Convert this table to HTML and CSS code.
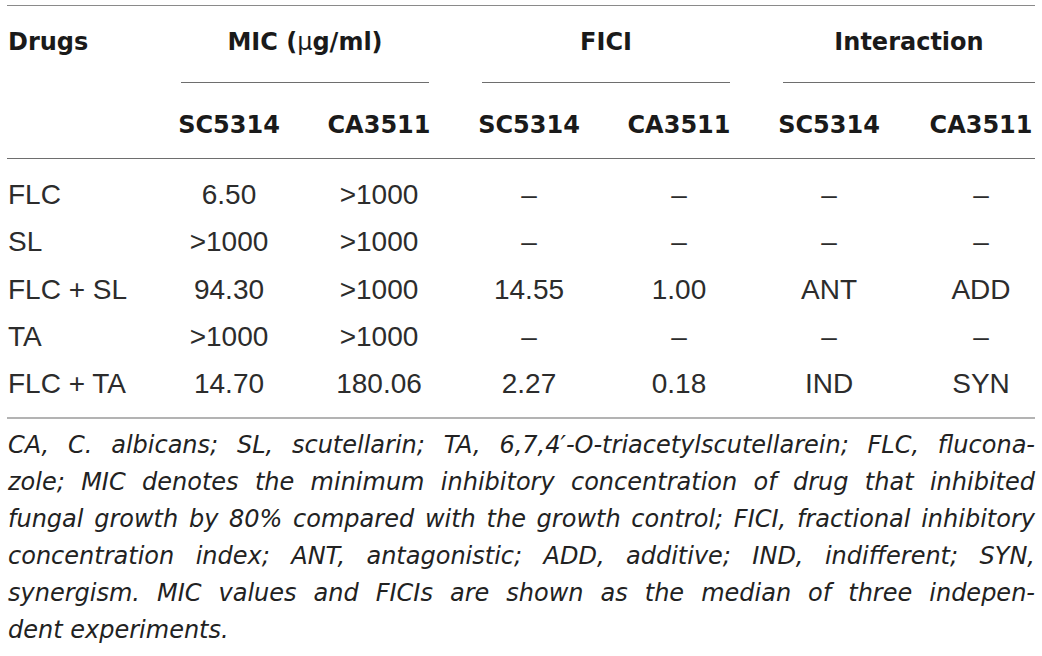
FILE: index.html
```html
<!DOCTYPE html>
<html lang="en">
<head>
<meta charset="utf-8">
<title>Table</title>
<link rel="stylesheet" href="styles.css">
</head>
<body>
<div class="page">
  <table class="tbl">
    <colgroup>
      <col class="c0"><col class="cn"><col class="cn"><col class="cn"><col class="cn"><col class="cn"><col class="clast">
    </colgroup>
    <thead>
      <tr class="h1">
        <th class="drugs">Drugs</th>
        <th colspan="2"><div class="grp g-mic">MIC (<span class="mu">µ</span>g/ml)</div></th>
        <th colspan="2"><div class="grp g-fici">FICI</div></th>
        <th colspan="2"><div class="grp g-int">Interaction</div></th>
      </tr>
      <tr class="h2">
        <th></th>
        <th>SC5314</th>
        <th>CA3511</th>
        <th>SC5314</th>
        <th>CA3511</th>
        <th>SC5314</th>
        <th class="last">CA3511</th>
      </tr>
    </thead>
    <tbody>
      <tr class="first">
        <td class="name">FLC</td><td>6.50</td><td>&gt;1000</td><td>–</td><td>–</td><td>–</td><td class="last">–</td>
      </tr>
      <tr>
        <td class="name">SL</td><td>&gt;1000</td><td>&gt;1000</td><td>–</td><td>–</td><td>–</td><td class="last">–</td>
      </tr>
      <tr>
        <td class="name">FLC + SL</td><td>94.30</td><td>&gt;1000</td><td>14.55</td><td>1.00</td><td>ANT</td><td class="last">ADD</td>
      </tr>
      <tr>
        <td class="name">TA</td><td>&gt;1000</td><td>&gt;1000</td><td>–</td><td>–</td><td>–</td><td class="last">–</td>
      </tr>
      <tr class="end">
        <td class="name">FLC + TA</td><td>14.70</td><td>180.06</td><td>2.27</td><td>0.18</td><td>IND</td><td class="last">SYN</td>
      </tr>
    </tbody>
  </table>
  <p class="note">
    <span class="ln">CA, C. albicans; SL, scutellarin; TA, 6,7,4′-O-triacetylscutellarein; FLC, flucona-</span>
    <span class="ln">zole; MIC denotes the minimum inhibitory concentration of drug that inhibited</span>
    <span class="ln">fungal growth by 80% compared with the growth control; FICI, fractional inhibitory</span>
    <span class="ln">concentration index; ANT, antagonistic; ADD, additive; IND, indifferent; SYN,</span>
    <span class="ln">synergism. MIC values and FICIs are shown as the median of three indepen-</span>
    <span class="ln lastln">dent experiments.</span>
  </p>
</div>
</body>
</html>
```

FILE: styles.css
```css
html, body {
  margin: 0;
  padding: 0;
  background: #ffffff;
}

body {
  font-family: "DejaVu Sans", "Liberation Sans", sans-serif;
  color: #1f1f1f;
}

.page {
  padding-top: 5px;
}

.tbl {
  margin-left: 7px;
  width: 1028px;
  table-layout: fixed;
  border-collapse: separate;
  border-spacing: 0;
  border-top: 1px solid #8a8a8a;
}

.c0 { width: 147px; }
.cn { width: 150px; }
.clast { width: 131px; }

.tbl th,
.tbl td {
  padding: 0;
  text-align: center;
  vertical-align: top;
  white-space: nowrap;
}

.tbl th {
  font-size: 24px;
  font-weight: bold;
  line-height: 28px;
  color: #1a1a1a;
}

.h1 th {
  padding-top: 22px;
}

.h1 .drugs {
  text-align: left;
  padding-left: 1px;
}

.grp {
  padding-bottom: 26px;
  border-bottom: 1px solid #6e6e6e;
}

.g-mic { margin: 0 25px 0 27px; }
.g-fici { margin: 0 24px 0 28px; }
.g-int { margin: 0 0 0 29px; }

.mu {
  font-weight: normal;
}

.h2 th {
  padding-top: 28px;
  padding-bottom: 19px;
  border-bottom: 1px solid #6e6e6e;
}

.tbl .last {
  padding-left: 23px;
}

.tbl td {
  font-family: "Liberation Sans", "DejaVu Sans", sans-serif;
  font-size: 28px;
  line-height: 47.3px;
  color: #2c2c2c;
}

.tbl td.name {
  text-align: left;
  padding-left: 1px;
}

.first td {
  padding-top: 12px;
}

.end td {
  padding-bottom: 10px;
  border-bottom: 2px solid #b3b3b3;
}

.note {
  margin: 8px 0 0 8px;
  width: 1027px;
  font-size: 24px;
  font-style: italic;
  line-height: 37px;
  color: #222222;
}

.ln {
  display: block;
  text-align: justify;
  text-align-last: justify;
}

.ln.lastln {
  text-align: left;
  text-align-last: left;
}
```
